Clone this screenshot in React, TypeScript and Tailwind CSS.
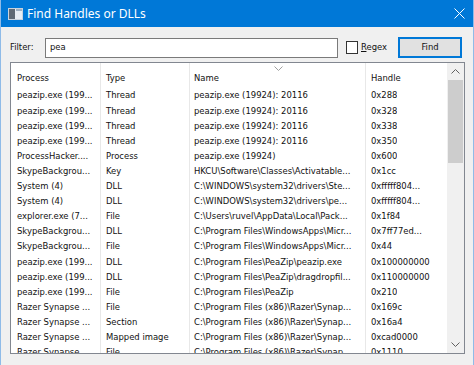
import React from "react";

const rows: [string, string, string, string][] = [
  ["peazip.exe (199...", "Thread", "peazip.exe (19924): 20116", "0x288"],
  ["peazip.exe (199...", "Thread", "peazip.exe (19924): 20116", "0x328"],
  ["peazip.exe (199...", "Thread", "peazip.exe (19924): 20116", "0x338"],
  ["peazip.exe (199...", "Thread", "peazip.exe (19924): 20116", "0x350"],
  ["ProcessHacker....", "Process", "peazip.exe (19924)", "0x600"],
  ["SkypeBackgrou...", "Key", "HKCU\\Software\\Classes\\Activatable...", "0x1cc"],
  ["System (4)", "DLL", "C:\\WINDOWS\\system32\\drivers\\Ste...", "0xfffff804..."],
  ["System (4)", "DLL", "C:\\WINDOWS\\system32\\drivers\\pe...", "0xfffff804..."],
  ["explorer.exe (7...", "File", "C:\\Users\\ruvel\\AppData\\Local\\Pack...", "0x1f84"],
  ["SkypeBackgrou...", "DLL", "C:\\Program Files\\WindowsApps\\Micr...", "0x7ff77ed..."],
  ["SkypeBackgrou...", "File", "C:\\Program Files\\WindowsApps\\Micr...", "0x44"],
  ["peazip.exe (199...", "DLL", "C:\\Program Files\\PeaZip\\peazip.exe", "0x100000000"],
  ["peazip.exe (199...", "DLL", "C:\\Program Files\\PeaZip\\dragdropfil...", "0x110000000"],
  ["peazip.exe (199...", "File", "C:\\Program Files\\PeaZip", "0x210"],
  ["Razer Synapse ...", "File", "C:\\Program Files (x86)\\Razer\\Synap...", "0x169c"],
  ["Razer Synapse ...", "Section", "C:\\Program Files (x86)\\Razer\\Synap...", "0x16a4"],
  ["Razer Synapse ...", "Mapped image", "C:\\Program Files (x86)\\Razer\\Synap...", "0xcad0000"],
  ["Razer Synapse ...", "File", "C:\\Program Files (x86)\\Razer\\Synap...", "0x1110"],
];

const listFont = { fontFamily: '"DejaVu Sans Condensed", Tahoma, "Liberation Sans", sans-serif' };

export default function App() {
  return (
    <div className="w-[474px] h-[365px] overflow-hidden bg-[#f0f0f0] border-x border-[#8fbbe8] flex flex-col text-[#111]" style={listFont}>
      {/* Title bar */}
      <div className="h-[27px] shrink-0 bg-[#0078d7] flex items-center pl-[8px] pr-[8px] -mx-px">
        <svg width="15" height="12" viewBox="0 0 15 12" className="shrink-0">
          <rect x="0.5" y="0.5" width="14" height="11" fill="#e8eef5" stroke="#c9d3de" />
          <rect x="1" y="1" width="6" height="10" fill="#5f6a76" />
          <rect x="8" y="1" width="6" height="2" fill="#9fb0c2" />
        </svg>
        <span className="ml-[4px] text-white text-[12px] leading-none" style={{ fontFamily: '"Noto Sans", "Open Sans", sans-serif' }}>
          Find Handles or DLLs
        </span>
        <svg width="11" height="11" viewBox="0 0 11 11" className="ml-auto mr-[1px]">
          <path d="M0.5 0.5 L10.5 10.5 M10.5 0.5 L0.5 10.5" stroke="#ffffff" strokeWidth="1" />
        </svg>
      </div>

      {/* Filter row */}
      <div className="h-[35px] shrink-0 flex items-center pl-[9px] pt-[6px] text-[9.4px]">
        <span className="w-[35px]">Filter:</span>
        <div className="w-[293px] h-[20px] bg-white border border-[#7a7a7a] flex items-center pl-[4px]">pea</div>
        <div className="ml-[8px] w-[12px] h-[13px] bg-white border border-[#333]" />
        <span className="ml-[3px]"><span className="underline">R</span>egex</span>
        <div className="ml-[11px] w-[64px] h-[21px] bg-[#e1e1e1] border-2 border-[#0078d7] flex items-center justify-center">
          Find
        </div>
      </div>

      {/* List */}
      <div className="ml-[9px] w-[455px] h-[292px] border border-[#828790] bg-white flex relative">
        <div className="flex-1 overflow-hidden relative">
          {/* grid lines */}
          <div className="absolute top-0 bottom-0 left-[89px] w-px bg-[#e8e8e8]" />
          <div className="absolute top-0 bottom-0 left-[178px] w-px bg-[#e8e8e8]" />
          <div className="absolute top-0 bottom-0 left-[354px] w-px bg-[#e8e8e8]" />
          <svg width="9" height="5" viewBox="0 0 9 5" className="absolute left-[263px] top-[3px]">
            <path d="M0.5 0.5 L4.5 4.5 L8.5 0.5" stroke="#a0a0a0" fill="none" />
          </svg>
          {/* header */}
          <div className="h-[25px] flex items-center pt-[5px] text-[9.4px]">
            <div className="w-[89px] pl-[6px]">Process</div>
            <div className="w-[89px] pl-[6px]">Type</div>
            <div className="w-[176px] pl-[5px]">Name</div>
            <div className="pl-[6px]">Handle</div>
          </div>
          {rows.map((r, i) => (
            <div key={i} className="h-[15.1px] flex items-center text-[9.4px] whitespace-nowrap">
              <div className="w-[89px] pl-[6px] overflow-hidden">{r[0]}</div>
              <div className="w-[89px] pl-[6px] overflow-hidden">{r[1]}</div>
              <div className="w-[176px] pl-[5px] overflow-hidden">{r[2]}</div>
              <div className="pl-[6px] overflow-hidden">{r[3]}</div>
            </div>
          ))}
        </div>
        {/* scrollbar */}
        <div className="w-[17px] shrink-0 bg-[#f0f0f0] flex flex-col items-center">
          <div className="h-[17px] w-full flex items-center justify-center">
            <svg width="9" height="5" viewBox="0 0 9 5">
              <path d="M0.5 4.5 L4.5 0.5 L8.5 4.5" stroke="#606060" fill="none" />
            </svg>
          </div>
          <div className="w-[15px] h-[83px] bg-[#cdcdcd]" />
          <div className="flex-1" />
          <div className="h-[17px] w-full flex items-center justify-center">
            <svg width="9" height="5" viewBox="0 0 9 5">
              <path d="M0.5 0.5 L4.5 4.5 L8.5 0.5" stroke="#606060" fill="none" />
            </svg>
          </div>
        </div>
      </div>
    </div>
  );
}
